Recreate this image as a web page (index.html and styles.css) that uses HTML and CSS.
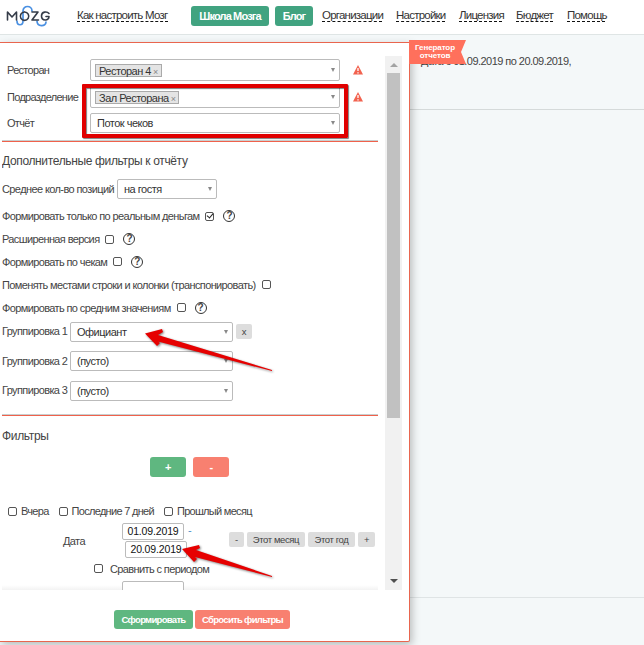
FILE: index.html
```
<!DOCTYPE html>
<html lang="ru">
<head>
<meta charset="utf-8">
<title>Генератор отчетов</title>
<link rel="stylesheet" href="styles.css">
</head>
<body>
<header class="topbar">
  <svg class="logo" width="46" height="25" viewBox="0 0 46 25" fill="none" stroke-linecap="round" stroke-linejoin="round">
    <path d="M11 17C11 22 17 22 17 17V7C17 1 26 1 26 7M31 17C31 23 40 23 40 18" stroke="#4a90e2" stroke-width="1.7"/>
    <path d="M1.5 16V8L6 13L10.5 8V16M18.5 8A4.2 4.2 0 1 0 18.6 8M26 8H32L26 16H32.500M43 9.500C41 7 35.500 7.500 35.500 12C35.500 17 43 17.500 43 12.500H40" stroke="#353c48" stroke-width="1.6"/>
  </svg>
  <nav class="menu">
    <a class="link howto">Как настроить Мозг</a>
    <a class="pill school">Школа Мозга</a>
    <a class="pill blog">Блог</a>
    <a class="link orgs">Организации</a>
    <a class="link settings">Настройки</a>
    <a class="link license">Лицензия</a>
    <a class="link budget">Бюджет</a>
    <a class="link help">Помощь</a>
  </nav>
</header>
<main class="page">
  <section class="panel">
    <div class="viewport">
      <div class="form">
        <div class="row r-rest"><label class="name">Ресторан</label><div class="select wide tall"><span class="tag">Ресторан 4<i>×</i></span></div><svg class="warn" viewBox="0 0 10 10"><path d="M5 0L10 9.5H0Z" fill="#f2624f"/><path d="M5 3V6M5 7.2V8.4" stroke="#fff" stroke-width="1.3"/></svg></div>
        <div class="row r-dep"><label class="name">Подразделение</label><div class="select wide tall"><span class="tag">Зал Ресторана<i>×</i></span></div><svg class="warn" viewBox="0 0 10 10"><path d="M5 0L10 9.5H0Z" fill="#f2624f"/><path d="M5 3V6M5 7.2V8.4" stroke="#fff" stroke-width="1.3"/></svg></div>
        <div class="row r-rep"><label class="name">Отчёт</label><div class="select wide">Поток чеков</div></div>
        <div class="rule top"></div>
        <h2 class="extra">Дополнительные фильтры к отчёту</h2>
        <div class="row r-avg"><label>Среднее кол-во позиций</label><div class="select small">на гостя</div></div>
        <div class="row check"><label>Формировать только по реальным деньгам</label><span class="box on"></span><span class="q">?</span></div>
        <div class="row check"><label>Расширенная версия</label><span class="box"></span><span class="q">?</span></div>
        <div class="row check"><label>Формировать по чекам</label><span class="box"></span><span class="q">?</span></div>
        <div class="row check"><label>Поменять местами строки и колонки (транспонировать)</label><span class="box"></span></div>
        <div class="row check"><label>Формировать по средним значениям</label><span class="box"></span><span class="q">?</span></div>
        <div class="row group first"><label>Группировка 1</label><div class="select mid">Официант</div><button class="chip x">x</button></div>
        <div class="row group"><label>Группировка 2</label><div class="select mid">(пусто)</div></div>
        <div class="row group"><label>Группировка 3</label><div class="select mid">(пусто)</div></div>
        <div class="rule"></div>
        <h2 class="filters">Фильтры</h2>
        <div class="addremove"><button class="btn green">+</button><button class="btn red">-</button></div>
        <div class="row periods">
          <span class="box"></span><label>Вчера</label>
          <span class="box"></span><label>Последние 7 дней</label>
          <span class="box"></span><label>Прошлый месяц</label>
        </div>
        <div class="row date">
          <label class="datename">Дата</label>
          <div class="dates"><div class="line"><span class="input">01.09.2019</span><span class="dash">-</span></div><span class="input second">20.09.2019</span></div>
          <div class="chips"><button class="chip minus">-</button><button class="chip month">Этот месяц</button><button class="chip year">Этот год</button><button class="chip plus">+</button></div>
        </div>
        <div class="row compare"><span class="box"></span><label>Сравнить с периодом</label></div>
        <div class="cut"><span class="input"></span></div>
      </div>
      <div class="scrollbar"><span class="up"></span><span class="thumb"></span><span class="down"></span></div>
    </div>
    <footer class="actions"><button class="btn green make">Сформировать</button><button class="btn red reset">Сбросить фильтры</button></footer>
  </section>
  <section class="report"><p class="title">Дата с 01.09.2019 по 20.09.2019,</p><div class="body"></div></section>
  <svg class="ribbon" width="57" height="24" viewBox="0 0 57 24"><path d="M0 0H57L52 12L57 24H0Z" fill="#ff705c"/></svg>
  <div class="ribbon ribbon-text">Генератор<br>отчетов</div>
  <div class="frame"></div>
  <svg class="arrow a1" width="128" height="44" viewBox="0 0 128 44"><path d="M1 4.500L18 0L19 3L14 6L128 41V42L14 12.500L16 14L13 17Z"/></svg>
  <svg class="arrow a2" width="92" height="36" viewBox="0 0 92 36"><path d="M1 5L18 1L19 4L15 6L91 32V33L14 13L16 15L13 18Z"/></svg>
</main>
</body>
</html>
```
FILE: styles.css
```
* { box-sizing: border-box; }
body { margin: 0; width: 644px; height: 645px; overflow: hidden; background: #f4f8f9; color: #444; font: 11px/14px "Liberation Sans", Arial, sans-serif; letter-spacing: -0.5px; }
button { border: 0; padding: 0; font: inherit; letter-spacing: inherit; color: inherit; }
label, .link, .pill, h2, .chip, .btn { white-space: nowrap; }
label { letter-spacing: -0.62px; }
.topbar { display: flex; height: 35px; background: #fff; border-bottom: 1px solid #dfe5e5; padding-left: 6px; }
.logo { margin-top: 4px; flex: none; }
.menu { display: flex; align-items: flex-start; margin-left: 25px; padding-top: 6px; }
.link { height: 16px; padding-top: 2px; border-bottom: 1px dashed #111; color: #333; font-size: 11.5px; line-height: 14px; letter-spacing: -0.77px; }
.pill { height: 20px; border-radius: 3px; background: #41a380; color: #fff; font-weight: bold; line-height: 20px; text-align: center; letter-spacing: -0.85px; }
.howto { width: 91px; }
.school { width: 78px; margin-left: 23px; }
.blog { width: 38px; margin-left: 6px; }
.orgs { width: 60px; margin-left: 9px; }
.settings { width: 49px; margin-left: 14px; }
.license { width: 43px; margin-left: 14px; }
.budget { width: 37px; margin-left: 14px; }
.help { width: 38px; margin-left: 14px; }

.page { position: relative; display: flex; height: 610px; padding-top: 7px; }
.panel { position: relative; z-index: 1; flex: none; width: 410px; height: 600px; padding-top: 13px; background: #fff; border: solid #e9654e; border-width: 1px 1px 1px 0; border-radius: 0 0 2px 0; box-shadow: 2px 3px 8px rgba(0,0,0,.25); }
.viewport { display: flex; height: 534px; margin-right: 7px; padding-left: 2px; justify-content: space-between; }
.form { width: 376px; height: 534px; padding-top: 1px; overflow: hidden; }
.row { display: flex; align-items: center; }
.name { width: 88px; padding-left: 5px; flex: none; letter-spacing: -0.7px; }
.select { position: relative; height: 20px; flex: none; border: 1px solid #bbb; border-radius: 2px; background: #fff; padding-left: 6px; line-height: 18px; color: #333; }
.select::after { content: ""; position: absolute; right: 4px; top: 50%; margin-top: -2px; border: solid transparent; border-width: 4px 2.5px 0; border-top-color: #888; }
.wide { width: 250px; }
.tall { height: 22px; padding: 4px; }
.small { width: 100px; }
.mid { width: 163px; }
.tag { display: block; width: max-content; height: 13px; padding: 0 3px; border: 1px solid #aaa; background: #e4e4e4; line-height: 12px; }
.tag i { font-style: normal; font-size: 9px; color: #888; margin-left: 2px; }
.warn { width: 10px; height: 10px; margin-left: 13px; }
.r-rest { height: 26px; }
.r-dep { height: 27px; }
.r-rep { height: 25px; }
.rule { height: 2px; margin-top: 12.8px; border-top: 1px solid #c9cfcf; border-bottom: 1px solid #f0614b; }
.rule.top { margin-top: 5px; }
h2 { margin: 0; font-size: 12px; font-weight: normal; line-height: 16px; letter-spacing: -0.35px; }
.extra { padding-top: 11px; height: 36px; }
.r-avg { height: 22px; }
.r-avg label { width: 115px; letter-spacing: -0.6px; }
.check { height: 22.8px; }
.r-avg + .check { margin-top: 5px; }
.box { flex: none; position: relative; width: 9px; height: 9px; border: 1px solid #555; border-radius: 2px; background: #fff; margin-left: 6px; }
.on::after { content: ""; position: absolute; left: 2px; top: -1px; width: 3px; height: 5px; border: solid #222; border-width: 0 1.5px 1.5px 0; transform: rotate(40deg); }
.q { width: 12px; height: 12px; margin-left: 9px; border: 1px solid #333; border-radius: 50%; font-weight: bold; font-size: 10px; line-height: 10px; text-align: center; letter-spacing: 0; }
.group { height: 20px; margin-bottom: 9.5px; }
.group label { width: 68px; padding-bottom: 1px; }
.first { margin-top: 3px; }
.chip { height: 15px; border-radius: 2px; background: #ddd; color: #444; font-size: 9.5px; line-height: 14px; letter-spacing: -0.4px; }
.x { width: 16px; margin-left: 3px; }
.filters { padding-top: 12px; height: 41px; }
.addremove { display: flex; gap: 7px; padding-left: 148px; }
.btn { height: 20px; border-radius: 3px; color: #fff; font-weight: bold; line-height: 20px; }
.addremove .btn { width: 36px; }
.green { background: #5fb780; }
.red { background: #f88070; }
.periods { height: 20px; margin-top: 24.5px; }
.periods label { margin-left: 4px; flex: none; letter-spacing: -0.7px; }
.periods .box { margin-left: 10px; }
.periods .box:first-child { margin-left: 6px; }
.date { height: 36px; margin-top: 1.5px; }
.datename { width: 120px; padding-left: 61px; flex: none; }
.dates { width: 107px; flex: none; }
.line { display: flex; }
.input { display: block; width: 62px; height: 17px; border: 1px solid #bbb; border-radius: 2px; background: #fff; color: #111; font-size: 10.5px; line-height: 15px; text-align: center; letter-spacing: -0.15px; }
.second { margin: 1px 0 0 3px; }
.dash { padding-left: 4px; color: #4a90c8; }
.chips { display: flex; gap: 3px; margin-top: -2px; }
.minus { width: 15px; }
.month { width: 58px; }
.year { width: 47px; }
.plus { width: 17px; }
.compare { height: 20px; margin-top: 0; }
.compare .box { margin-left: 92px; }
.compare label { margin-left: 7px; }
.cut { height: 10px; margin-top: 1px; padding: 1px 0 0 120px; overflow: hidden; background: linear-gradient(#fff 50%, #f3f3f3); }
.scrollbar { display: flex; flex-direction: column; align-items: center; width: 17px; background: #f1f1f1; }
.up { margin-top: 7px; border: solid transparent; border-width: 0 4px 4px; border-bottom-color: #a3a3a3; }
.thumb { width: 13px; height: 345px; margin-top: 6px; background: #c1c1c1; }
.down { margin: auto 0 7px; border: solid transparent; border-width: 4px 4px 0; border-top-color: #505050; }
.actions { display: flex; gap: 2px; padding: 20px 0 0 114px; }
.actions .btn { height: 19px; font-size: 9.5px; line-height: 19px; }
.make { width: 79px; letter-spacing: -0.7px; }
.reset { width: 95px; letter-spacing: -0.7px; }

.report { flex: 1; margin-top: -7px; }
.title { margin: 0; height: 75px; padding: 19px 0 0 11px; white-space: nowrap; letter-spacing: -0.54px; border-bottom: 1px solid #d5dada; }
.body { height: 488px; border-bottom: 1px solid #dfe4e5; }
.ribbon { position: absolute; z-index: 2; left: 409px; top: 5px; width: 57px; height: 24px; }
.ribbon-text { padding: 4px 8px 0 3px; color: #fff; font-size: 8px; line-height: 8px; font-weight: bold; text-align: center; letter-spacing: -0.1px; }
.frame { position: absolute; z-index: 3; left: 82px; top: 49px; width: 266px; height: 54px; border: 4px solid #e00000; border-radius: 1px; box-shadow: 1px 1px 1px rgba(0,0,0,.5), inset 1px 1px 1px rgba(0,0,0,.5); }
.arrow { position: absolute; z-index: 3; fill: #e60000; filter: drop-shadow(1px 1px 1px rgba(0,0,0,.5)); }
.a1 { left: 144px; top: 294px; }
.a2 { left: 181px; top: 509px; }
```
